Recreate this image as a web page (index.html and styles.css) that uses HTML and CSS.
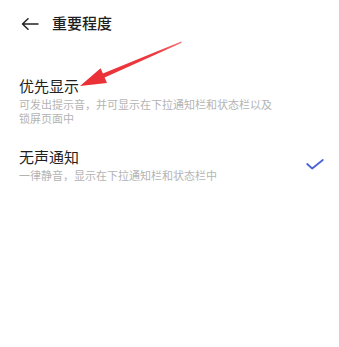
FILE: index.html
```html
<!DOCTYPE html>
<html lang="zh-CN">
<head>
<meta charset="utf-8">
<title>重要程度</title>
<link rel="stylesheet" href="styles.css">
</head>
<body>
<div class="page">
  <header class="header">
    <svg class="back" width="18" height="12" viewBox="0 0 18 12">
      <path d="M17 6H1.5M7 0.8L1.5 6L7 11.2" fill="none" stroke="#222" stroke-width="1.5" stroke-linecap="round" stroke-linejoin="round"/>
    </svg>
    <h1 class="title">重要程度</h1>
  </header>
  <ul class="list">
    <li class="item">
      <div class="text">
        <div class="item-title">优先显示</div>
        <div class="item-sub">可发出提示音，并可显示在下拉通知栏和状态栏以及锁屏页面中</div>
      </div>
    </li>
    <li class="item">
      <div class="text">
        <div class="item-title">无声通知</div>
        <div class="item-sub">一律静音，显示在下拉通知栏和状态栏中</div>
      </div>
      <svg class="check" width="18" height="11" viewBox="0 0 18 11">
        <path d="M1.2 5L6.2 9.5L16.8 1" fill="none" stroke="#4a63d8" stroke-width="1.8" stroke-linecap="round" stroke-linejoin="round"/>
      </svg>
    </li>
  </ul>
  <svg class="annot" width="339" height="347" viewBox="0 0 339 347">
    <defs>
      <linearGradient id="g" x1="80" y1="86" x2="182" y2="42" gradientUnits="userSpaceOnUse">
        <stop offset="0" stop-color="#ea2f36"/>
        <stop offset="0.75" stop-color="#ec3a40"/>
        <stop offset="1" stop-color="#f2797c"/>
      </linearGradient>
    </defs>
    <polygon points="80,86 107,83 104.6,77.6 181.8,42.8 181.2,41.5 102.9,73.6 100.6,68.3" fill="url(#g)"/>
  </svg>
</div>
</body>
</html>
```

FILE: styles.css
```css
* { box-sizing: border-box; }
html, body {
  margin: 0;
  padding: 0;
  background: #ffffff;
}
body {
  font-family: "Noto Sans CJK SC", "Noto Sans", sans-serif;
  color: #1f1f1f;
}
.page {
  position: relative;
  width: 339px;
  height: 347px;
  overflow: hidden;
}
.header {
  height: 46px;
  display: flex;
  align-items: center;
  padding-left: 21px;
}
.back {
  display: block;
  margin-top: 2px;
}
.title {
  margin: 0 0 0 13px;
  font-size: 15px;
  line-height: 20px;
  font-weight: 500;
  color: #1f1f1f;
}
.list {
  list-style: none;
  margin: 0;
  padding: 19px 0 0 0;
}
.item {
  display: flex;
  align-items: center;
  padding: 11px 15px 11px 19px;
}
.text {
  flex: 1;
  min-width: 0;
}
.item-title {
  font-size: 15px;
  line-height: 20px;
  color: #1f1f1f;
}
.item-sub {
  margin-top: 2px;
  font-size: 11px;
  line-height: 13.5px;
  color: #b4b4b4;
  padding-right: 45px;
}
.check {
  display: block;
  flex: none;
  margin-left: 12px;
}
.annot {
  position: absolute;
  left: 0;
  top: 0;
  pointer-events: none;
}
```
